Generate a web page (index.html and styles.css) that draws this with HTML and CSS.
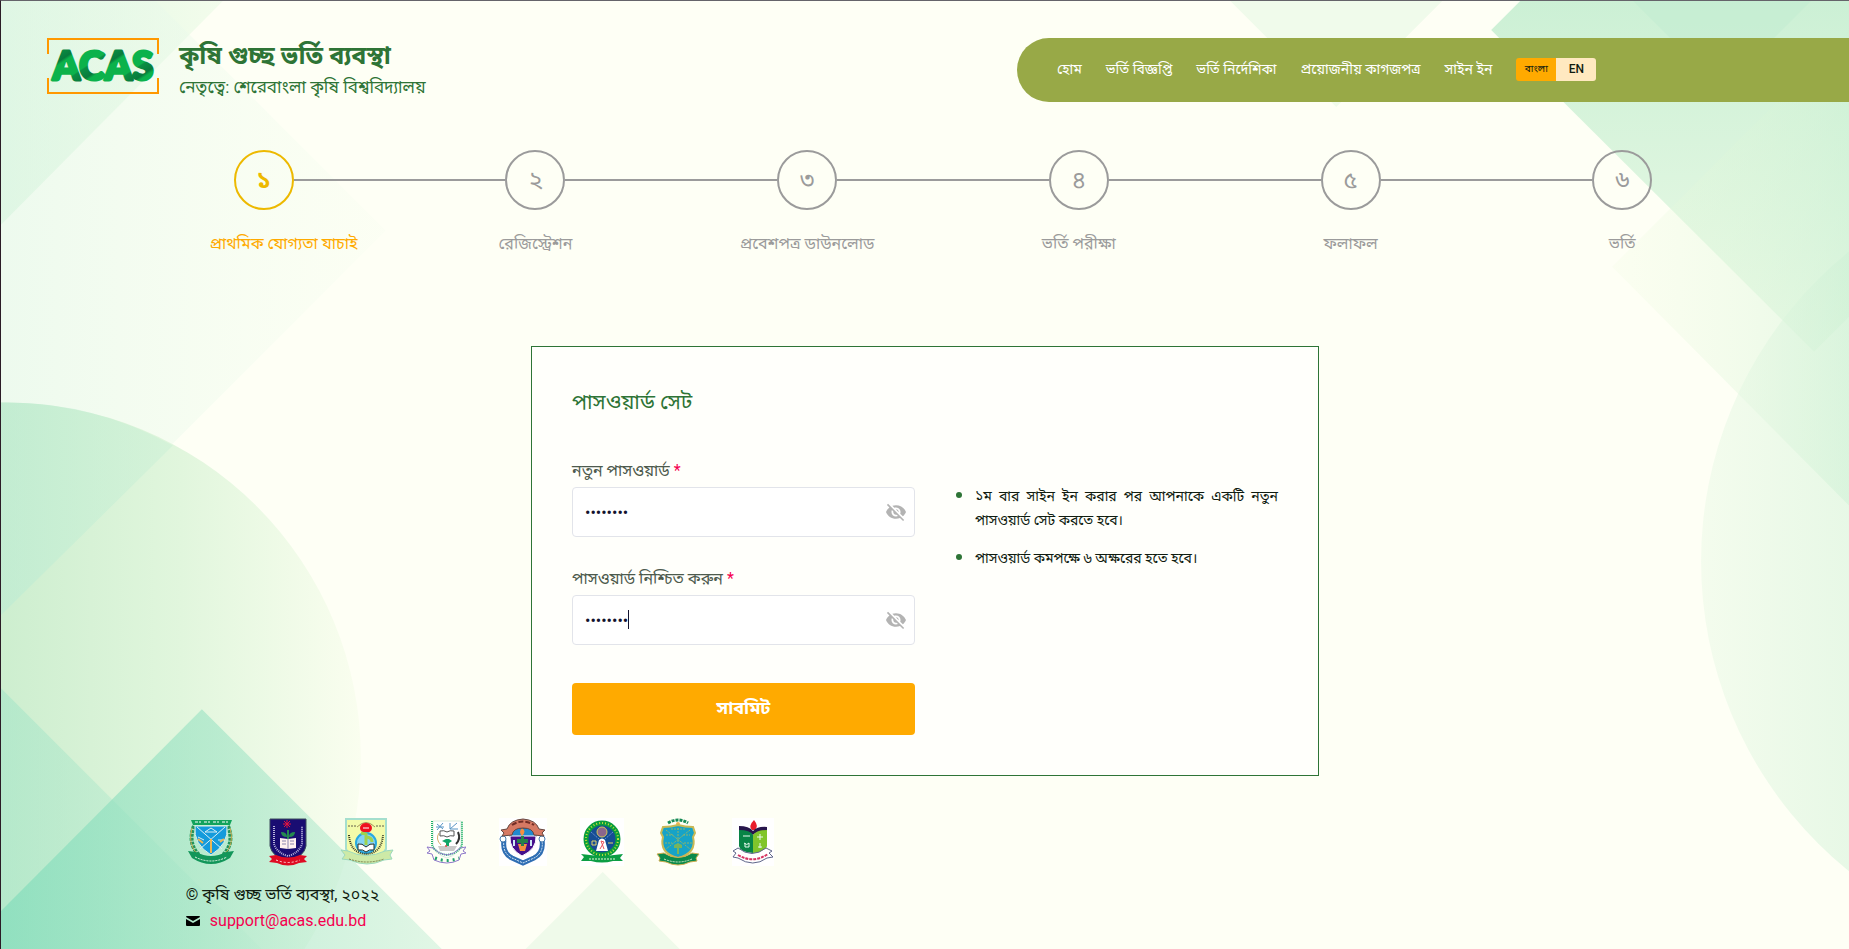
FILE: index.html
```html
<!DOCTYPE html>
<html lang="bn">
<head>
  <meta charset="UTF-8" />
  <meta name="viewport" content="width=device-width, initial-scale=1.0" />
  <title>কৃষি গুচ্ছ ভর্তি ব্যবস্থা</title>
  <link rel="stylesheet" href="styles.css">
</head>
<body>
  <svg class="page-bg" viewBox="0 0 1849 949" preserveAspectRatio="none" aria-hidden="true">
    <defs>
      <linearGradient id="bgCorner" gradientUnits="userSpaceOnUse" x1="0" y1="0" x2="222" y2="0">
        <stop offset="0" stop-color="#a6e8b8" stop-opacity=".36" />
        <stop offset="1" stop-color="#dff8dc" stop-opacity=".36" />
      </linearGradient>
      <linearGradient id="bgDiamond" gradientUnits="userSpaceOnUse" x1="0" y1="0" x2="385" y2="0">
        <stop offset="0" stop-color="#dff6e8" stop-opacity=".55" />
        <stop offset="1" stop-color="#f3fdee" stop-opacity=".2" />
      </linearGradient>
      <linearGradient id="bgCircle" gradientUnits="userSpaceOnUse" x1="0" y1="0" x2="361" y2="0">
        <stop offset="0" stop-color="#cdeecf" />
        <stop offset=".5" stop-color="#e1f6dd" />
        <stop offset="1" stop-color="#fafeef" />
      </linearGradient>
      <linearGradient id="bgOverlap" gradientUnits="userSpaceOnUse" x1="0" y1="0" x2="240" y2="0">
        <stop offset="0" stop-color="#b8ebd4" stop-opacity=".5" />
        <stop offset="1" stop-color="#c5efd2" stop-opacity=".3" />
      </linearGradient>
      <linearGradient id="bgLow" gradientUnits="userSpaceOnUse" x1="0" y1="0" x2="263" y2="0">
        <stop offset="0" stop-color="#a5e5c8" stop-opacity=".6" />
        <stop offset="1" stop-color="#a5e5c8" stop-opacity=".1" />
      </linearGradient>
      <linearGradient id="bgPeak" gradientUnits="userSpaceOnUse" x1="0" y1="0" x2="441" y2="0">
        <stop offset="0" stop-color="#80dcba" stop-opacity=".68" />
        <stop offset=".5" stop-color="#9ce3c4" stop-opacity=".6" />
        <stop offset="1" stop-color="#c4eed6" stop-opacity=".5" />
      </linearGradient>
      <linearGradient id="bgRight" gradientUnits="userSpaceOnUse" x1="0" y1="0" x2="0" y2="351">
        <stop offset="0" stop-color="#ccf0d5" />
        <stop offset="1" stop-color="#ecfae7" />
      </linearGradient>
      <linearGradient id="bgRightBand" gradientUnits="userSpaceOnUse" x1="1612" y1="0" x2="1849" y2="0">
        <stop offset="0" stop-color="#effbdf" stop-opacity=".2" />
        <stop offset="1" stop-color="#cdf1d5" stop-opacity=".5" />
      </linearGradient>
      <linearGradient id="bgRightCircle" gradientUnits="userSpaceOnUse" x1="1701" y1="0" x2="1849" y2="0">
        <stop offset="0" stop-color="#eaf9e6" stop-opacity=".5" />
        <stop offset="1" stop-color="#ccf0d4" stop-opacity=".45" />
      </linearGradient>
    </defs>
    <path fill="url(#bgCorner)" d="M0 0H222L0 224z" />
    <path fill="url(#bgDiamond)" d="M0 0H155L385 230 0 615z" />
    <circle fill="url(#bgCircle)" cx="5" cy="757" r="355" />
    <path fill="url(#bgOverlap)" d="M0 402Q90 400 172 445L0 615z" />
    <path fill="url(#bgLow)" d="M0 688L261 949H0z" />
    <path fill="url(#bgPeak)" d="M201 709L441 949H0V911z" />
    <path fill="#effaea" d="M602 872l77 77H525z" />
    <path fill="#f0fbeb" d="M1230 0h212l-106 106z" />
    <path fill="url(#bgRight)" d="M1520 0H1849V316L1814 351 1491 29z" />
    <path fill="#bdead0" fill-opacity=".4" d="M1633 0h178l-89 89z" />
    <path fill="url(#bgRightBand)" d="M1612 266L1849 29V505z" />
    <circle fill="url(#bgRightCircle)" cx="2100" cy="561" r="399" />
  </svg>

  <header class="site-header">
    <a class="brand" href="#">
      <svg class="brand-logo" viewBox="0 0 112 57" role="img" aria-label="ACAS">
        <defs>
          <linearGradient id="leaf" gradientUnits="userSpaceOnUse" x1="0" y1="0" x2="16" y2="24" spreadMethod="repeat">
            <stop offset="0" stop-color="#0bb24b" />
            <stop offset=".55" stop-color="#0bb24b" />
            <stop offset=".6" stop-color="#0a8f43" />
            <stop offset=".9" stop-color="#087a3c" />
            <stop offset="1" stop-color="#0bb24b" />
          </linearGradient>
        </defs>
        <path fill="none" stroke="#ff9800" stroke-width="2" d="M1 16V1H111V16M1 40V55H111V40" />
        <text class="brand-mark" x="56" y="42" text-anchor="middle" fill="url(#leaf)" stroke="url(#leaf)">ACAS</text>
      </svg>
      <span class="brand-text">
        <strong>কৃষি গুচ্ছ ভর্তি ব্যবস্থা</strong>
        <span>নেতৃত্বে: শেরেবাংলা কৃষি বিশ্ববিদ্যালয়</span>
      </span>
    </a>
    <nav>
      <a href="#">হোম</a>
      <a href="#">ভর্তি বিজ্ঞপ্তি</a>
      <a href="#">ভর্তি নির্দেশিকা</a>
      <a href="#">প্রয়োজনীয় কাগজপত্র</a>
      <a href="#">সাইন ইন</a>
      <div class="lang">
        <button type="button" class="active">বাংলা</button>
        <button type="button">EN</button>
      </div>
    </nav>
  </header>

  <ol class="steps">
    <li class="active"><span class="num">১</span><span class="label">প্রাথমিক যোগ্যতা যাচাই</span></li>
    <li><span class="num">২</span><span class="label">রেজিস্ট্রেশন</span></li>
    <li><span class="num">৩</span><span class="label">প্রবেশপত্র ডাউনলোড</span></li>
    <li><span class="num">৪</span><span class="label">ভর্তি পরীক্ষা</span></li>
    <li><span class="num">৫</span><span class="label">ফলাফল</span></li>
    <li><span class="num">৬</span><span class="label">ভর্তি</span></li>
  </ol>

  <main class="card">
    <h1>পাসওয়ার্ড সেট</h1>
    <div class="card-body">
      <form>
        <div class="field">
          <label for="password">নতুন পাসওয়ার্ড <span>*</span></label>
          <div class="input-wrap">
            <input type="password" id="password" value="12345678">
            <button type="button" class="eye" aria-label="পাসওয়ার্ড দেখুন">
              <svg viewBox="1 2 22 20"><path d="M12 7c2.76 0 5 2.24 5 5 0 .65-.13 1.26-.36 1.83l2.92 2.92c1.51-1.26 2.7-2.89 3.43-4.75-1.73-4.39-6-7.5-11-7.5-1.4 0-2.74.25-3.98.7l2.16 2.16C10.74 7.13 11.35 7 12 7zM2 4.27l2.74 2.74C3.08 8.3 1.78 10.02 1 12c1.73 4.39 6 7.5 11 7.5 1.55 0 3.03-.3 4.38-.84L19.73 22 21 20.73 3.27 3 2 4.27zM7.53 9.8l1.55 1.55c-.05.21-.08.43-.08.65 0 1.66 1.34 3 3 3 .22 0 .44-.03.65-.08l1.55 1.55c-.67.33-1.41.53-2.2.53-2.76 0-5-2.24-5-5 0-.79.2-1.53.53-2.2zm4.31-.78l3.15 3.15.02-.16c0-1.66-1.34-3-3-3l-.17.01z" /></svg>
            </button>
          </div>
        </div>
        <div class="field">
          <label for="confirm">পাসওয়ার্ড নিশ্চিত করুন <span>*</span></label>
          <div class="input-wrap">
            <input type="password" id="confirm" value="12345678" autofocus>
            <span class="caret"></span>
            <button type="button" class="eye" aria-label="পাসওয়ার্ড দেখুন">
              <svg viewBox="1 2 22 20"><path d="M12 7c2.76 0 5 2.24 5 5 0 .65-.13 1.26-.36 1.83l2.92 2.92c1.51-1.26 2.7-2.89 3.43-4.75-1.73-4.39-6-7.5-11-7.5-1.4 0-2.74.25-3.98.7l2.16 2.16C10.74 7.13 11.35 7 12 7zM2 4.27l2.74 2.74C3.08 8.3 1.78 10.02 1 12c1.73 4.39 6 7.5 11 7.5 1.55 0 3.03-.3 4.38-.84L19.73 22 21 20.73 3.27 3 2 4.27zM7.53 9.8l1.55 1.55c-.05.21-.08.43-.08.65 0 1.66 1.34 3 3 3 .22 0 .44-.03.65-.08l1.55 1.55c-.67.33-1.41.53-2.2.53-2.76 0-5-2.24-5-5 0-.79.2-1.53.53-2.2zm4.31-.78l3.15 3.15.02-.16c0-1.66-1.34-3-3-3l-.17.01z" /></svg>
            </button>
          </div>
        </div>
        <button type="submit" class="submit">সাবমিট</button>
      </form>
      <ul class="hints">
        <li>১ম বার সাইন ইন করার পর আপনাকে একটি নতুন পাসওয়ার্ড সেট করতে হবে।</li>
        <li>পাসওয়ার্ড কমপক্ষে ৬ অক্ষরের হতে হবে।</li>
      </ul>
    </div>
  </main>

  <footer>
    <div class="emblems">
      <svg width="50" height="48" viewBox="0 0 50 48" aria-hidden="true">
        <path fill="#12a35c" d="M5 2h41l-2 5H7z" />
        <path stroke="#fff" stroke-dasharray="3 1 2 3" d="M9 4h33" />
        <path fill="none" stroke="#24945a" stroke-width="4" stroke-dasharray="3 1" d="M8 8Q1 26 14 38M42 8q7 18-6 30" />
        <path fill="none" stroke="#c5a84d" d="M6 10Q1 26 12 37M44 10q5 16-6 27" />
        <path fill="#149bdc" stroke="#dff4e6" d="M9 8h32q2 18-16 29Q7 26 9 8z" />
        <path fill="none" stroke="#d8eef5" d="M11 9l25 22M39 9L14 31M19 14l6-4 6 4zM12 19l6 3M32 22h7" />
        <path fill="none" stroke="#edb653" stroke-width="2" d="M25 21v14M12 21l5 4M34 24l4-3" />
        <path fill="#12965a" d="M2 33l8 1q15 8 30 0l8-1-4 7q-19 12-38 0z" />
        <path fill="none" stroke="#e6f7e8" stroke-dasharray="2 1" d="M9 39q16 8 32 0" />
      </svg>
      <svg width="40" height="48" viewBox="0 0 40 48" aria-hidden="true">
        <path fill="#190d72" stroke="#3c4d5d" d="M2 1h36v27q-2 11-18 15Q4 39 2 28z" />
        <path fill="none" stroke="#b9b5dd" stroke-width="2" stroke-dasharray="1 1" d="M6 8v18q3 9 14 12 11-3 14-12V8" />
        <path stroke="#e5133f" d="M19 2v8M15 6h8M16 3l6 6M22 3l-6 6" />
        <path fill="#258950" d="M19 21V12h2v9zM19 19q-6 0-6-5 6 0 6 5zM21 19q6 0 6-5-6 0-6 5z" />
        <path fill="#fff0ef" d="M12 20l8 1 8-1v10l-8 1-8-1z" />
        <path stroke="#8b83ad" d="M20 21v10M14 23h4M14 26h4M22 23h4M22 26h4" />
        <path fill="#df0b23" d="M1 38l7-1q12 5 24 0l7 1-3 3 3 3-8 1q-11 5-22 0l-8-1 3-3z" />
        <path fill="none" stroke="#ffdada" stroke-dasharray="2 2" d="M8 42q12 5 24 0" />
      </svg>
      <svg width="54" height="48" viewBox="0 0 54 48" aria-hidden="true">
        <path fill="#f3fba9" stroke="#a5dfce" stroke-width="2" d="M6 1h40v30q-4 9-20 10Q9 39 6 31z" />
        <path stroke="#62614c" stroke-dasharray="2 1" d="M8 8h9M36 8h9" />
        <path fill="none" stroke="#a09357" d="M17 9q9-9 18 0" />
        <ellipse fill="#ef101e" cx="26" cy="10" rx="6" ry="5" />
        <path stroke="#fff" d="M23 10h6" />
        <circle fill="#84d3f3" stroke="#27a9e1" stroke-width="2" cx="26" cy="25" r="10" />
        <path fill="none" stroke="#9fd34d" stroke-width="3" d="M26 27V16l-5-1M26 19q6 0 6 5" />
        <path fill="#fff" stroke="#23312b" d="M18 26q4-1 8 3 4-4 8-3v6q-5-1-8 2-3-3-8-2z" />
        <path fill="none" stroke="#333622" stroke-width="2" stroke-dasharray="1 1" d="M9 17q1 13 9 17 8 4 16 0 8-4 9-17" />
        <path fill="#cdeaa7" stroke="#9bd9bd" d="M1 32l7 1q18 9 37 0l8-1-3 5 2 4-8 1q-17 8-34 0l-8-1 3-4z" />
        <path fill="none" stroke="#7b804f" stroke-dasharray="2 1" d="M9 41q18 6 35 0" />
      </svg>
      <svg width="40" height="48" viewBox="0 0 40 48" aria-hidden="true">
        <path fill="#fff" stroke="#dbeade" d="M7 3h28v24q-2 9-14 13Q9 36 7 27z" />
        <path fill="none" stroke="#20b36b" stroke-width="2" stroke-dasharray="1 1" d="M6 3v24q3 8 15 10 12-2 15-10V3" />
        <path fill="none" stroke="#5995c5" d="M11 6l6 5M17 5l-6 7M10 9h8M24 11l7-6M24 5v6h8" />
        <path fill="#fff" stroke="#555" d="M14 13q4-1 7 1 3-2 7-1v5q-4-1-7 1-3-2-7-1z" />
        <path fill="#10a568" d="M20 21h3l3 2-3 2v3h-3v-3l-4-2z" />
        <path fill="none" stroke="#333" stroke-width="2" d="M32 14q3 7-2 12" />
        <path fill="none" stroke="#d9ae6e" d="M13 15q-4 6 2 12" />
        <path fill="#c9c9c9" d="M12 28h19l-3 5H14z" />
        <circle fill="#e34d4d" cx="20" cy="28" r="1" />
        <path fill="none" stroke="#8e79ca" d="M7 30l-6-1 3 4-3 2 5 1 2 6q13 6 25 0l2-6 5-1-3-2 3-4-6 1q-13 14-27 0z" />
        <path fill="none" stroke="#22a16b" stroke-width="3" stroke-dasharray="2 4" d="M9 40q12 5 24 0" />
      </svg>
      <svg width="50" height="48" viewBox="-1 0 50 48" aria-hidden="true">
        <path fill="#fff" d="M0 0h48v48H0z" />
        <path fill="none" stroke="#2f6eb3" stroke-width="5" d="M5 22q-2 13 8 18l11 5 11-5q10-5 8-18" />
        <path fill="none" stroke="#d9eaf8" stroke-dasharray="2 1" d="M5 22q-2 13 8 18l11 5 11-5q10-5 8-18" />
        <circle fill="#fff" stroke="#477caf" cx="4" cy="21" r="3" />
        <circle fill="#fff" stroke="#477caf" cx="43" cy="21" r="3" />
        <path fill="#2189cf" stroke="#304565" d="M12 10h24l1 9H11z" />
        <path fill="#45108c" stroke="#fff" d="M11 18h26q1 13-14 20Q10 31 11 18z" />
        <path fill="#f5903f" d="M23 10q5 3 0 8-4-4 0-8zM19 26h9l-2 7h-5z" />
        <path fill="#258249" d="M22 18h3v10h-3zM18 21h11v4H18z" />
        <path stroke="#cfe9f5" stroke-width="2" d="M15 22v6M32 22v6" />
        <path fill="#d67963" stroke="#654740" d="M2 12l6-1q3-9 16-10 13 1 16 10l6 1-3 3 2 3-10-1q-1-7-11-7t-11 7L3 18l2-3z" />
        <path fill="none" stroke="#722d25" stroke-width="2" stroke-dasharray="5 2" d="M13 7q11-7 22 0" />
      </svg>
      <svg width="44" height="48" viewBox="0 0 44 48" aria-hidden="true">
        <path fill="#fff" d="M0 0h44v48H0z" />
        <circle fill="#164d94" stroke="#099d3c" stroke-width="5" cx="22" cy="21" r="16" />
        <circle fill="none" stroke="#c0df3c" stroke-width="2" stroke-dasharray="1 2" cx="22" cy="21" r="16" />
        <circle fill="#8c668c" stroke="#d4c55a" cx="22" cy="14" r="5" />
        <path stroke="#668fd0" stroke-dasharray="2 1" d="M11 14l8 7M33 14l-8 7" />
        <path fill="#fff" d="M19 22q3-3 6 0l3 11H16z" />
        <path fill="none" stroke="#ed535b" d="M20 31l4-7-3-1 3 8" />
        <path fill="none" stroke="#e0d369" d="M12 23h4v4h-4zM28 25h5" />
        <path fill="#0c9e44" d="M1 36l9 1q12 2 24 0l9-1-3 4 3 3H33q-11 3-22 0H1l3-4z" />
        <path stroke="#e5f8dc" stroke-dasharray="2 1" d="M9 41h26" />
      </svg>
      <svg width="44" height="48" viewBox="0 0 44 48" aria-hidden="true">
        <path fill="none" stroke="#168a55" stroke-width="3" stroke-dasharray="3 1" d="M12 5q10-6 20 0" />
        <circle fill="#efb252" cx="22" cy="6" r="2" />
        <path fill="#16a3c7" stroke="#c8b955" stroke-width="2" d="M7 9q8 0 15-2 7 2 15 2l2 6-2 4q4 16-15 21Q3 35 7 19l-2-4z" />
        <path stroke="#8fb568" stroke-dasharray="2 1" d="M10 12l24 19M34 12L10 31M15 11h14M10 17h7M27 17h7M9 25h7M28 25h8M22 10v26" />
        <path fill="#78b45e" d="M18 27q4-3 8 0v3h-3v6h-2v-6h-3z" />
        <path fill="#0b8a4b" stroke="#d0af52" d="M1 36l7-1q14 9 28 0l7 1-3 4 1 3-7 1q-12 6-24 0l-7-1 1-3z" />
        <path fill="none" stroke="#d7eac8" stroke-dasharray="2 1" d="M8 41q14 6 28 0" />
      </svg>
      <svg width="42" height="48" viewBox="0 0 42 48" aria-hidden="true">
        <path fill="#fff" d="M0 0h42v48H0z" />
        <path fill="#e91d2b" d="M22 2q5 6 1 10h-3q-4-4 2-10z" />
        <path fill="#28164c" d="M7 8q10 0 14 5 5-5 14-4v5q-10-1-14 3-5-4-14-4z" />
        <path fill="#088446" d="M7 12q11 0 14 5v18q-13-1-14-7z" />
        <path fill="#80c52b" d="M35 12q-10 0-14 5v18q13-1 14-7z" />
        <path fill="none" stroke="#e8faf0" d="M11 18h7M12 25q3 3 5 0M13 25v4h4v-4M28 16v6M25 19h6M28 25v5M26 29h4" />
        <path fill="#fff" stroke="#5f6689" d="M6 30l-5 3 3 2-3 4 5 1q15 10 29 0l6-1-4-4 3-2-6-3q-14 11-28 0z" />
        <path fill="none" stroke="#d63462" stroke-width="2" stroke-dasharray="3 1" d="M6 37q15 9 30-1" />
      </svg>
    </div>
    <p>© কৃষি গুচ্ছ ভর্তি ব্যবস্থা, ২০২২</p>
    <p class="mail">
      <svg viewBox="0 0 14 10" aria-hidden="true"><path d="M1 0h12q1 0 1 1L7 5 0 1q0-1 1-1zM0 3l7 4 7-4v6q0 1-1 1H1q-1 0-1-1z" /></svg>
      <a href="mailto:support@acas.edu.bd">support@acas.edu.bd</a>
    </p>
  </footer>
</body>
</html>
```
FILE: styles.css
```css
* {
  box-sizing: border-box;
}
body {
  margin: 0;
  min-height: 100vh;
  position: relative;
  border-top: 1px solid #65646a;
  border-left: 1px solid #2b1c26;
  background: #fefff5;
  color: #101c10;
  font-family: Roboto, "Noto Sans Bengali", sans-serif;
  font-size: 16px;
  line-height: 24px;
}
a {
  text-decoration: none;
}
button {
  font-family: inherit;
  border: none;
  padding: 0;
  cursor: pointer;
}
.page-bg {
  position: absolute;
  top: 0;
  left: 0;
  width: 100%;
  height: 100%;
  z-index: -1;
}

/* header */
.site-header {
  display: flex;
  justify-content: space-between;
  align-items: flex-start;
  padding: 37px 0 0 46px;
}
.brand {
  display: flex;
  gap: 20px;
  color: #2e7436;
}
.brand-logo {
  width: 112px;
  height: 57px;
}
.brand-mark {
  font-family: Lato, sans-serif;
  font-weight: 900;
  font-size: 39px;
  stroke-width: 3px;
  stroke-linejoin: round;
}
.brand-text {
  display: flex;
  flex-direction: column;
}
.brand-text strong {
  font-size: 25px;
  line-height: 35px;
}
.brand-text span {
  font-size: 17px;
  line-height: 28px;
}
nav {
  display: flex;
  align-items: center;
  gap: 24px;
  width: 45vw;
  height: 64px;
  padding: 0 0 2px 40px;
  border-radius: 32px 0 0 32px;
  background: #98a947;
  white-space: nowrap;
}
nav a {
  color: #fff;
  font-size: 14px;
}
.lang {
  display: flex;
  border-radius: 3px;
  overflow: hidden;
}
.lang button {
  width: 40px;
  height: 23px;
  font-size: 12px;
  font-weight: 500;
  background: #ffe9c0;
  color: #101c10;
}
.lang .active {
  background: #ffaa00;
  font-size: 10px;
  font-weight: 400;
}

/* progress steps */
.steps {
  display: flex;
  list-style: none;
  margin: 48px 10% 0;
  padding: 0 12px 0 48px;
  color: #9b9b9b;
}
.steps li {
  flex: 1;
  display: grid;
  grid-template-columns: 60px 1fr;
  row-gap: 22px;
  align-items: center;
}
.steps li:last-child {
  flex: none;
}
.steps li:not(:last-child)::after {
  content: '';
  grid-column: 2;
  grid-row: 1;
  height: 2px;
  background: #9b9b9b;
}
.num {
  width: 60px;
  height: 60px;
  border: 2px solid #9b9b9b;
  border-radius: 50%;
  font-size: 24px;
  line-height: 56px;
  text-align: center;
}
.label {
  grid-row: 2;
  grid-column: 1;
  justify-self: center;
  white-space: nowrap;
}
.steps .active .num {
  border-color: #edb900;
  color: #edb900;
  font-weight: bold;
}
.steps .active .label {
  justify-self: start;
  margin-left: -24px;
  color: #ffaa00;
}

/* password card */
.card {
  max-width: 788px;
  margin: 90px auto 0;
  padding: 40px;
  border: 1px solid #2e7436;
  background: rgba(255, 255, 255, 0.6);
}
.card h1 {
  margin: 0 0 42px;
  font-size: 21px;
  font-weight: 400;
  line-height: 30px;
  color: #2e7436;
}
.card-body {
  display: grid;
  grid-template-columns: 1fr 1fr;
  gap: 20px;
}
.field {
  margin-bottom: 30px;
}
.field label {
  display: block;
  margin-bottom: 4px;
  color: #4d5a4d;
}
.field label span {
  color: #f5004f;
}
.input-wrap {
  position: relative;
}
.input-wrap input {
  display: block;
  width: 100%;
  height: 50px;
  padding: 0 44px 0 12px;
  border: 1px solid #e2e4ea;
  border-radius: 4px;
  outline: none;
  background: #fff;
  color: #12122e;
  caret-color: transparent;
  font-family: inherit;
  font-size: 16px;
}
.caret {
  position: absolute;
  top: 15px;
  left: 56px;
  width: 1px;
  height: 19px;
  background: #12122e;
}
.eye {
  position: absolute;
  top: 15px;
  right: 9px;
  width: 20px;
  height: 20px;
  background: none;
}
.eye svg {
  display: block;
  width: 20px;
  height: 20px;
  fill: #b3b3b3;
}
.submit {
  width: 100%;
  height: 52px;
  margin-top: 8px;
  border-radius: 4px;
  background: #ffaa00;
  color: #fff;
  font-size: 18px;
  font-weight: bold;
}
.hints {
  margin: 0;
  padding: 23px 0 0 40px;
  font-size: 16px;
  text-align: justify;
}
.hints li {
  margin-bottom: 12px;
  font-size: 14px;
}
.hints li::marker {
  color: #2e7436;
  font-size: 20px;
}

/* footer */
footer {
  margin: 42px 10% 0;
  padding-bottom: 14px;
}
footer p {
  margin: 0;
  line-height: 26px;
}
.emblems {
  display: flex;
  gap: 32px;
  margin-bottom: 16px;
}
.mail {
  display: flex;
  align-items: center;
  gap: 10px;
}
.mail svg {
  width: 14px;
  height: 10px;
}
.mail a {
  color: #f5004f;
}
```
